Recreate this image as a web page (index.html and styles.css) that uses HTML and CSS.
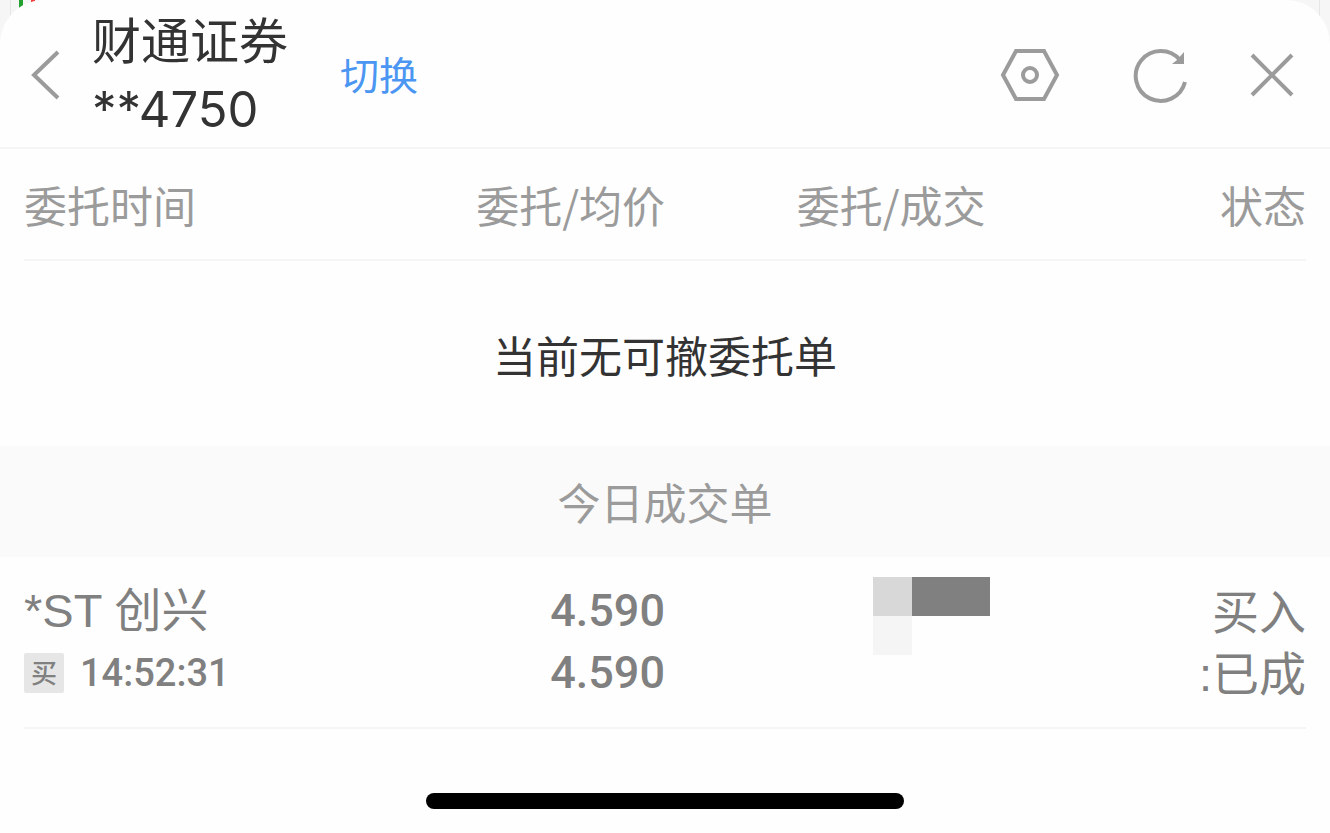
FILE: index.html
```html
<!DOCTYPE html>
<html lang="zh-CN">
  <head>
    <meta charset="UTF-8" />
    <meta name="viewport" content="width=device-width, initial-scale=1.0" />
    <title>委托单</title>
    <link rel="stylesheet" href="styles.css">
  </head>
  <body>
    <!-- 被弹层盖住的K线页 -->
    <div class="backdrop">
      <span class="candle up"></span>
      <span class="candle down"></span>
    </div>

    <div class="sheet">
      <header class="header">
        <button class="icon-btn back" aria-label="返回">
          <svg width="32" height="52" viewBox="0 0 32 52">
            <path d="M28 3 L4 26 L28 49" />
          </svg>
        </button>
        <h1 class="account">财通证券<br />**4750</h1>
        <a class="switch" href="#">切换</a>
        <div class="actions">
          <button class="icon-btn" aria-label="设置">
            <svg width="80" height="60" viewBox="-10 0 80 60">
              <path d="M16 6 H44 L57 30 L44 54 H16 L3 30 Z" />
              <circle cx="30" cy="30" r="7" />
            </svg>
          </button>
          <button class="icon-btn" aria-label="刷新">
            <svg width="60" height="60" viewBox="0 0 60 60">
              <path d="M55 37 A25 25 0 1 1 50 15" />
              <path class="solid" d="M54 7 V19 H42 L47 15 Z" />
            </svg>
          </button>
          <button class="icon-btn" aria-label="关闭">
            <svg width="44" height="60" viewBox="0 0 44 60">
              <path d="M2 10 L42 50 M42 10 L2 50" />
            </svg>
          </button>
        </div>
      </header>

      <!-- 可撤委托 -->
      <table class="orders">
        <thead>
          <tr>
            <th>委托时间</th>
            <th>委托/均价</th>
            <th>委托/成交</th>
            <th>状态</th>
          </tr>
        </thead>
        <tbody>
          <tr>
            <td class="empty" colspan="4">当前无可撤委托单</td>
          </tr>
        </tbody>
      </table>

      <!-- 今日成交 -->
      <h2 class="section-title">今日成交单</h2>
      <table class="orders deals">
        <tbody>
          <tr>
            <td>
              <div class="name">*ST 创兴</div>
              <div class="time"><span class="tag">买</span>14:52:31</div>
            </td>
            <td class="price">4.590<br />4.590</td>
            <td class="amount">
              <div class="mosaic">
                <span class="light"></span>
                <span class="dark"></span>
                <span class="pale"></span>
              </div>
            </td>
            <td class="status">买入<br />:已成</td>
          </tr>
        </tbody>
      </table>

      <div class="home-bar"></div>
    </div>
  </body>
</html>
```
FILE: styles.css
```css
* {
  box-sizing: border-box;
}

body {
  margin: 0;
  background-color: #fefefe;
  font-family: Inter, "Noto Sans CJK SC", sans-serif;
  color: #333;
}

.backdrop {
  position: absolute;
  top: 0;
  left: 0;
  right: 0;
  height: 60px;
  background-color: #f6f6f6;
}

.backdrop::before {
  content: "";
  position: absolute;
  top: 0;
  bottom: 0;
  left: 10px;
  right: 10px;
  border: 1px solid #e6e6e6;
  border-width: 0 1px;
}

.candle {
  position: absolute;
  top: 0;
  width: 4px;
}

.candle.up {
  left: 19px;
  height: 8px;
  background-color: #22a030;
}

.candle.down {
  left: 31px;
  height: 3px;
  background-color: #f04040;
}

.sheet {
  position: relative;
  display: flex;
  flex-direction: column;
  min-height: 100vh;
  background-color: #fefefe;
  border-radius: 44px 44px 0 0;
}

.header {
  display: flex;
  align-items: center;
  height: 149px;
  padding: 2px 36px 0 30px;
  border-bottom: 2px solid #f5f5f5;
}

.icon-btn {
  padding: 0;
  border: none;
  background: none;
  cursor: pointer;
}

.icon-btn svg {
  display: block;
  fill: none;
  stroke: #9b9b9b;
  stroke-width: 4;
}

.icon-btn .solid {
  fill: #9b9b9b;
  stroke: none;
}

.account {
  margin: 0 0 0 30px;
  padding-top: 2px;
  font-size: 49px;
  font-weight: 400;
  line-height: 68px;
}

.switch {
  margin-left: 52px;
  padding-top: 2px;
  font-size: 39px;
  line-height: 56px;
  color: #4a96f2;
  text-decoration: none;
}

.actions {
  display: flex;
  gap: 60px;
  margin-left: auto;
}

.orders {
  width: calc(100% - 48px);
  margin: 0 24px;
  border-collapse: collapse;
  table-layout: fixed;
}

.orders th,
.orders td {
  padding: 0;
  text-align: right;
}

.orders th:first-child,
.orders td:first-child {
  text-align: left;
}

.orders th {
  height: 111px;
  font-family: "Noto Sans CJK SC", sans-serif;
  font-size: 43px;
  font-weight: 400;
  line-height: 60px;
  color: #9b9b9b;
  border-bottom: 2px solid #f5f5f5;
}

.orders .empty:first-child {
  height: 186px;
  font-size: 43px;
  text-align: center;
}

.section-title {
  margin: 0;
  padding-top: 6px;
  background-color: #fafafa;
  font-size: 43px;
  font-weight: 400;
  line-height: 105px;
  text-align: center;
  color: #9b9b9b;
}

.deals td {
  height: 171px;
  padding-top: 23px;
  vertical-align: top;
  line-height: 62px;
  color: #808080;
  border-bottom: 2px solid #f5f5f5;
}

.name,
.status {
  font-family: "Liberation Sans", "Noto Sans CJK SC", sans-serif;
  font-size: 47px;
}

.deals .status {
  padding-top: 25px;
}

.time {
  display: flex;
  align-items: center;
  gap: 16px;
  font-family: Roboto, "Noto Sans CJK SC", sans-serif;
  font-size: 38px;
  font-weight: 500;
}

.tag {
  width: 40px;
  height: 40px;
  border-radius: 2px;
  background-color: #e6e6e6;
  font-size: 26px;
  line-height: 42px;
  text-align: center;
}

.price {
  font-family: Roboto, sans-serif;
  font-size: 45px;
  font-weight: 500;
}

/* 打码的数量 */
.mosaic {
  display: grid;
  grid-template-columns: 39px 78px;
  grid-auto-rows: 39px;
  justify-content: end;
  margin-right: -4px;
}

.deals .amount {
  padding-top: 20px;
}

.mosaic .light {
  background-color: #d8d8d8;
}

.mosaic .dark {
  background-color: #808080;
}

.mosaic .pale {
  background-color: #f5f5f5;
}

.home-bar {
  width: 36%;
  height: 16px;
  margin: auto auto 24px;
  border-radius: 8px;
  background-color: #000;
}
```
